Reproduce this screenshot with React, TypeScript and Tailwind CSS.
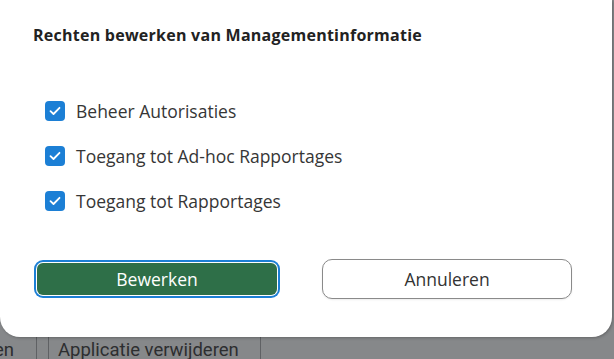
import { useState } from "react";

const items = [
  "Beheer Autorisaties",
  "Toegang tot Ad-hoc Rapportages",
  "Toegang tot Rapportages",
];

const Check = ({ label }: { label: string }) => {
  const [on, setOn] = useState(true);
  return (
    <label className="flex items-center gap-[11px] h-[22px] cursor-pointer" onClick={() => setOn(!on)}>
      <span
        className={
          on
            ? "w-5 h-5 rounded-[4px] bg-[#1c7fd5] flex items-center justify-center"
            : "w-5 h-5 rounded-[4px] border border-[#888] bg-white"
        }
      >
        {on && (
          <svg width="12" height="10" viewBox="0 0 12 10" fill="none">
            <path d="M1.5 5.2 4.5 8 10.5 1.8" stroke="#fff" strokeWidth="1.8" strokeLinecap="round" strokeLinejoin="round" />
          </svg>
        )}
      </span>
      <span className="text-[17.5px] text-[#363636] font-['Open_Sans',sans-serif]">{label}</span>
    </label>
  );
};

export default function App() {
  return (
    <div className="w-[614px] h-[359px] bg-[#86888a] overflow-hidden flex flex-col">
      <div className="relative z-10 w-[612px] h-[337px] shrink-0 bg-white rounded-b-[20px] shadow-[1px_1px_3px_rgba(0,0,0,0.25)] flex flex-col pl-[33px]">
        <h2 className="mt-[24px] text-[16px] leading-[22px] tracking-[0.25px] font-bold text-[#222] font-['Open_Sans',sans-serif]">
          Rechten bewerken van Managementinformatie
        </h2>
        <div className="mt-[54px] ml-[12px] flex flex-col gap-[23px]">
          {items.map((l) => (
            <Check key={l} label={l} />
          ))}
        </div>
        <div className="mt-[47px] flex items-center">
          <button className="ml-[4px] w-[240px] h-[32px] rounded-[6px] bg-[#2e6f48] text-white text-[17.5px] font-['Open_Sans',sans-serif] shadow-[0_0_0_1px_#fff,0_0_0_3px_#1c7fd5]">
            Bewerken
          </button>
          <button className="ml-[45px] w-[250px] h-[40px] rounded-[10px] border border-[#8a8a8a] bg-white text-[#333] text-[17.5px] font-['Open_Sans',sans-serif] shadow-[0_1px_2px_rgba(0,0,0,0.08)]">
            Annuleren
          </button>
        </div>
      </div>
      <div className="flex gap-[10px] -mt-[20px] ml-[-30px]">
        <div className="w-[67px] h-[50px] rounded-[8px] border border-[#5f6164] flex items-end justify-end pr-[22px] pb-[1px] text-[18.5px] text-[#2d2e30] font-['Roboto',sans-serif]">
          en
        </div>
        <div className="w-[213px] h-[50px] ml-[1px] rounded-[8px] border border-[#5f6164] flex items-end justify-start pl-[9px] pb-[1px] text-[18.5px] text-[#2d2e30] font-['Roboto',sans-serif]">
          Applicatie verwijderen
        </div>
      </div>
    </div>
  );
}
